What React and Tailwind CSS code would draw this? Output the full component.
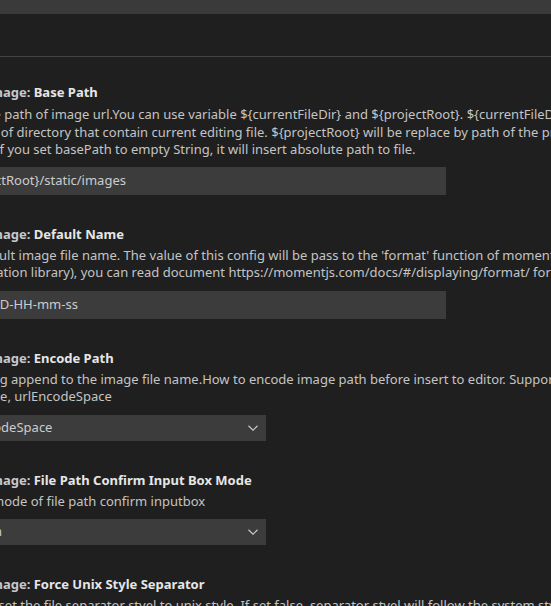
import React from "react";

function Chevron() {
  return (
    <svg
      className="absolute right-[5px] top-1/2 -translate-y-1/2 w-4 h-4"
      viewBox="0 0 16 16"
      fill="none"
    >
      <path d="M3.5 5.75 L8 10.25 L12.5 5.75" stroke="#cccccc" strokeWidth="1.1" />
    </svg>
  );
}

function Title({ label }) {
  return (
    <div className="leading-[18px] whitespace-nowrap font-bold">
      <span className="text-[#c8c8c8]">Paste Image: </span>
      <span className="text-[#e6e6e6]">{label}</span>
    </div>
  );
}

function Desc({ lines, first }) {
  return (
    <div
      className={
        first
          ? "mt-[5px] leading-[17.5px] whitespace-nowrap text-[#c4c4c4]"
          : "mt-[4px] leading-[17.5px] whitespace-nowrap text-[#c4c4c4]"
      }
    >
      {lines.map((l, i) => (
        <div key={i}>{l}</div>
      ))}
    </div>
  );
}

function TextInput({ value, first }) {
  return (
    <div
      className={
        first
          ? "mt-[8px] w-[500px] h-[28px] bg-[#3c3c3c] flex items-center pl-[5px] text-[#cccccc] whitespace-nowrap"
          : "mt-[9px] w-[500px] h-[28px] bg-[#3c3c3c] flex items-center pl-[5px] text-[#cccccc] whitespace-nowrap"
      }
    >
      {value}
    </div>
  );
}

function Select({ value }) {
  return (
    <div className="relative mt-[9px] w-[320px] h-[26px] bg-[#3c3c3c] flex items-center pl-[9px] text-[#cccccc] whitespace-nowrap">
      {value}
      <Chevron />
    </div>
  );
}

export default function App() {
  return (
    <div className="w-[551px] h-[606px] overflow-hidden bg-[#1f1f1f] font-['Noto_Sans',sans-serif] text-[13px]">
      <div className="h-[14px] bg-[#3a3a3a]" />
      <div className="h-[42px]" />
      <div className="h-px bg-[#444444]" />
      <div className="-ml-[54px] pt-[26px] flex flex-col">
        <div className="mb-[30px]">
          <Title label="Base Path" />
          <Desc
            first
            lines={[
              "The base path of image url.You can use variable ${currentFileDir} and ${projectRoot}. ${currentFileDir} will be replace by",
              "the path of directory that contain current editing file. ${projectRoot} will be replace by path of the project opened in",
              "vscode. If you set basePath to empty String, it will insert absolute path to file.",
            ]}
          />
          <TextInput first value="${projectRoot}/static/images" />
        </div>
        <div className="mb-[30px]">
          <Title label="Default Name" />
          <Desc
            lines={[
              "The default image file name. The value of this config will be pass to the 'format' function of moment library(a js time",
              "manipulation library), you can read document https://momentjs.com/docs/#/displaying/format/ for more information.",
            ]}
          />
          <TextInput value="Y-MM-DD-HH-mm-ss" />
        </div>
        <div className="mb-[30px]">
          <Title label="Encode Path" />
          <Desc
            lines={[
              "The string append to the image file name.How to encode image path before insert to editor. Support options: none,",
              "urlEncode, urlEncodeSpace",
            ]}
          />
          <Select value="urlEncodeSpace" />
        </div>
        <div className="mb-[30px]">
          <Title label="File Path Confirm Input Box Mode" />
          <Desc lines={["Set the mode of file path confirm inputbox"]} />
          <Select value="fullPath" />
        </div>
        <div>
          <Title label="Force Unix Style Separator" />
          <Desc
            lines={[
              "Force to set the file separator styel to unix style. If set false, separator styel will follow the system style.",
            ]}
          />
        </div>
      </div>
    </div>
  );
}
